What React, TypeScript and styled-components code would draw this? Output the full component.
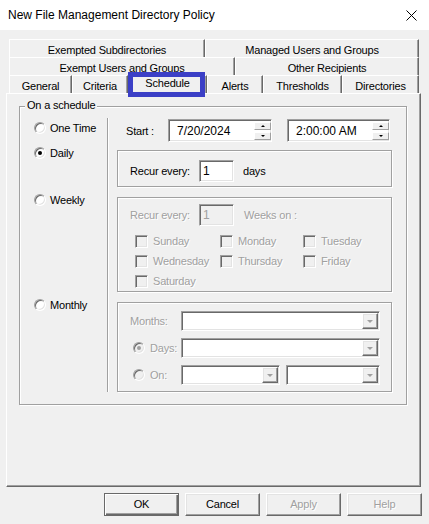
import React from "react";
import styled, { createGlobalStyle, css } from "styled-components";

const Global = createGlobalStyle`
  html, body { margin: 0; padding: 0; background: #f0f0f0; }
  body {
    font-family: "Liberation Sans", Arial, sans-serif;
    font-size: 11px;
    letter-spacing: -0.2px;
    color: #000;
  }
  * { box-sizing: border-box; }
`;

const sunken = css`
  border: 1px solid;
  border-color: #a0a0a0 #fff #fff #a0a0a0;
  box-shadow: inset 1px 1px 0 #696969, inset -1px -1px 0 #e3e3e3;
`;

const raised = css`
  border: 1px solid;
  border-color: #fff #696969 #696969 #fff;
  box-shadow: inset -1px -1px 0 #a0a0a0, inset 1px 1px 0 #e3e3e3;
`;

const disabledText = css`
  color: #a0a0a0;
  text-shadow: 1px 1px 0 #fff;
`;

const Window = styled.div`
  width: 429px;
  height: 524px;
  display: flex;
  flex-direction: column;
  background: #f0f0f0;
  overflow: hidden;
`;

const TitleBar = styled.div`
  height: 30px;
  flex: none;
  background: #fff;
  display: flex;
  align-items: center;
  justify-content: space-between;
  padding: 0 12px 0 8px;
`;

const Title = styled.div`
  font-size: 12px;
  letter-spacing: 0;
  padding-bottom: 1px;
`;

const CloseButton = styled.span`
  display: flex;
  width: 11px;
  height: 11px;
`;

const Body = styled.div`
  flex: 1;
  display: flex;
  flex-direction: column;
  padding: 9px 8px 0 6px;
`;

const TabStrip = styled.div`
  display: flex;
  flex-direction: column;
  margin: 0 2px 0 3px;
  position: relative;
  z-index: 1;
`;

const TabRow = styled.div`
  display: flex;
  height: 18px;
`;

const Tab = styled.div<{ $w: number; $selected?: boolean }>`
  position: relative;
  flex: 0 0 ${(p) => p.$w}px;
  display: flex;
  align-items: center;
  justify-content: center;
  white-space: nowrap;
  border-top: 1px solid #fff;
  border-left: 1px solid #fff;
  border-right: 1px solid #696969;
  box-shadow: inset -1px 0 0 #a0a0a0;
  padding-top: ${(p) => (p.$selected ? 0 : 2)}px;
  padding-bottom: ${(p) => (p.$selected ? 3 : 0)}px;
`;

const Highlight = styled.span`
  position: absolute;
  top: -4px;
  left: -1px;
  right: 1px;
  bottom: -4px;
  border: 5px solid #3b3fc6;
  pointer-events: none;
`;

const Panel = styled.div`
  height: 394px;
  flex: none;
  border: 1px solid;
  border-color: #fff #696969 #696969 #fff;
  box-shadow: inset -1px -1px 0 #a0a0a0;
  padding: 12px 13px 0 12px;
`;

const GroupBox = styled.div`
  position: relative;
  border: 1px solid #a0a0a0;
  box-shadow: inset 1px 1px 0 #fff, 1px 1px 0 #fff;
  padding: 11px 14px 12px 0;
`;

const GroupLabel = styled.span`
  position: absolute;
  top: -8px;
  left: 5px;
  padding: 0 2px;
  line-height: 13px;
  background: #f0f0f0;
`;

type SectionKind = "first" | "middle" | "last";

const Section = styled.div`
  display: grid;
  grid-template-columns: 88px 1fr;
  column-gap: 9px;
`;

const LeftCell = styled.div<{ $kind: SectionKind }>`
  border-right: 1px solid #a0a0a0;
  box-shadow: 1px 0 0 #fff;
  padding-left: 14px;
  padding-top: ${(p) => (p.$kind === "first" ? 4 : 0)}px;
`;

const RightCell = styled.div<{ $kind: SectionKind }>`
  padding-top: ${(p) => (p.$kind === "first" ? 1 : 3)}px;
  padding-bottom: ${(p) =>
    p.$kind === "first" ? 5 : p.$kind === "middle" ? 7 : 0}px;
`;

const RadioItem = styled.label<{ $disabled?: boolean }>`
  display: flex;
  align-items: center;
  gap: 4px;
  height: 12px;
  line-height: 12px;
  white-space: nowrap;
  ${(p) => p.$disabled && disabledText}
`;

const RadioCircle = styled.span<{ $checked?: boolean; $disabled?: boolean }>`
  position: relative;
  flex: none;
  width: 12px;
  height: 12px;
  border-radius: 50%;
  background: ${(p) => (p.$disabled ? "#f0f0f0" : "#fff")};
  border: 1px solid;
  border-color: #a0a0a0 #fff #fff #a0a0a0;
  box-shadow: inset 1px 1px 0 #696969, inset -1px -1px 0 #e3e3e3;
  &::after {
    content: "";
    display: ${(p) => (p.$checked ? "block" : "none")};
    position: absolute;
    left: 3px;
    top: 3px;
    width: 4px;
    height: 4px;
    border-radius: 50%;
    background: ${(p) => (p.$disabled ? "#a0a0a0" : "#000")};
  }
`;

const StartRow = styled.div`
  display: flex;
  align-items: center;
  height: 23px;
  padding-left: 9px;
`;

const FieldLabel = styled.span<{ $w: number; $disabled?: boolean }>`
  flex: none;
  width: ${(p) => p.$w}px;
  white-space: nowrap;
  ${(p) => p.$disabled && disabledText}
`;

const SpinBox = styled.div<{ $w: number; $gapBefore?: number }>`
  ${sunken};
  width: ${(p) => p.$w}px;
  margin-left: ${(p) => p.$gapBefore ?? 0}px;
  height: 23px;
  display: flex;
  background: #fff;
`;

const SpinText = styled.span`
  flex: 1;
  display: flex;
  align-items: center;
  padding-left: 8px;
  font-size: 12px;
  letter-spacing: 0;
`;

const SpinButtons = styled.div`
  width: 17px;
  flex: none;
  display: flex;
  flex-direction: column;
  justify-content: center;
  gap: 2px;
`;

const SpinButton = styled.span<{ $dir: "up" | "down" }>`
  height: 8px;
  display: flex;
  align-items: center;
  justify-content: center;
  background: #f0f0f0;
  border: 1px solid;
  border-color: #fff #a0a0a0 #a0a0a0 #fff;
  &::before {
    content: "";
    border-left: 2px solid transparent;
    border-right: 2px solid transparent;
    ${(p) =>
      p.$dir === "up"
        ? "border-bottom: 2px solid #000;"
        : "border-top: 2px solid #000;"}
  }
`;

const Frame = styled.div<{ $h: number }>`
  height: ${(p) => p.$h}px;
  border: 1px solid #a0a0a0;
  box-shadow: inset 1px 1px 0 #fff, 1px 1px 0 #fff;
`;

const FrameRow = styled.div<{ $pt: number }>`
  display: flex;
  align-items: center;
  padding: ${(p) => p.$pt}px 0 0 12px;
`;

const TextBox = styled.div<{ $disabled?: boolean }>`
  ${sunken};
  width: 35px;
  height: 22px;
  flex: none;
  display: flex;
  align-items: center;
  padding-left: 3px;
  font-size: 12px;
  letter-spacing: 0;
  background: ${(p) => (p.$disabled ? "#f0f0f0" : "#fff")};
  color: ${(p) => (p.$disabled ? "#a0a0a0" : "#000")};
`;

const AfterText = styled.span<{ $ml: number; $disabled?: boolean }>`
  margin-left: ${(p) => p.$ml}px;
  white-space: nowrap;
  ${(p) => p.$disabled && disabledText}
`;

const DaysGrid = styled.div`
  display: grid;
  grid-template-columns: 85px 83px 1fr;
  grid-auto-rows: 20px;
  margin: 5px 0 0 17px;
`;

const CheckItem = styled.label`
  display: flex;
  align-items: center;
  gap: 5px;
  white-space: nowrap;
  ${disabledText}
`;

const CheckBox = styled.span`
  ${sunken};
  width: 13px;
  height: 13px;
  flex: none;
  background: #f0f0f0;
`;

const MonthRows = styled.div`
  display: flex;
  flex-direction: column;
  gap: 7px;
  padding: 8px 11px 0 12px;
`;

const MonthRow = styled.div`
  display: flex;
  align-items: center;
  gap: 6px;
  height: 20px;
`;

const MonthLabel = styled.span`
  flex: none;
  width: 45px;
  display: flex;
  align-items: center;
  gap: 5px;
  white-space: nowrap;
  ${disabledText}
`;

const RadioSlot = styled.span`
  display: flex;
  padding-left: 3px;
`;

const Combo = styled.div<{ $w?: number }>`
  ${sunken};
  ${(p) => (p.$w ? `width: ${p.$w}px; flex: none;` : "flex: 1;")}
  height: 20px;
  display: flex;
  justify-content: flex-end;
  padding: 1px;
  background: #fff;
`;

const ComboButton = styled.span`
  width: 16px;
  display: flex;
  align-items: center;
  justify-content: center;
  background: #f0f0f0;
  ${raised};
  &::before {
    content: "";
    margin-top: 1px;
    border-left: 3px solid transparent;
    border-right: 3px solid transparent;
    border-top: 3px solid #a0a0a0;
  }
`;

const ButtonRow = styled.div`
  display: flex;
  justify-content: flex-end;
  gap: 6px;
  padding-top: 6px;
  margin-right: -1px;
`;

const DialogButton = styled.button<{ $default?: boolean }>`
  width: 75px;
  height: 23px;
  padding: 0 0 1px;
  font: inherit;
  letter-spacing: inherit;
  background: #f0f0f0;
  color: #000;
  ${raised};
  ${(p) =>
    p.$default &&
    css`
      border-color: #696969;
      box-shadow: inset 1px 1px 0 #fff, inset -1px -1px 0 #696969,
        inset -2px -2px 0 #a0a0a0;
    `}
  &:disabled {
    ${disabledText}
  }
`;

const TAB_ROWS: { label: string; w: number; selected?: boolean }[][] = [
  [
    { label: "Exempted Subdirectories", w: 196 },
    { label: "Managed Users and Groups", w: 214 },
  ],
  [
    { label: "Exempt Users and Groups", w: 226 },
    { label: "Other Recipients", w: 184 },
  ],
  [
    { label: "General", w: 63 },
    { label: "Criteria", w: 56 },
    { label: "Schedule", w: 79, selected: true },
    { label: "Alerts", w: 56 },
    { label: "Thresholds", w: 79 },
    { label: "Directories", w: 77 },
  ],
];

const WEEKDAYS = [
  "Sunday",
  "Monday",
  "Tuesday",
  "Wednesday",
  "Thursday",
  "Friday",
  "Saturday",
];

function Radio({
  label,
  checked,
}: {
  label: string;
  checked?: boolean;
}) {
  return (
    <RadioItem>
      <RadioCircle $checked={checked} />
      {label}
    </RadioItem>
  );
}

function Spin({ value, w, gap }: { value: string; w: number; gap?: number }) {
  return (
    <SpinBox $w={w} $gapBefore={gap}>
      <SpinText>{value}</SpinText>
      <SpinButtons>
        <SpinButton $dir="up" />
        <SpinButton $dir="down" />
      </SpinButtons>
    </SpinBox>
  );
}

function Dropdown({ w }: { w?: number }) {
  return (
    <Combo $w={w}>
      <ComboButton />
    </Combo>
  );
}

export default function App() {
  return (
    <>
      <Global />
      <Window>
        <TitleBar>
          <Title>New File Management Directory Policy</Title>
          <CloseButton>
            <svg width="11" height="11" viewBox="0 0 11 11">
              <path
                d="M0.5 0.5 L10.5 10.5 M10.5 0.5 L0.5 10.5"
                stroke="#000"
                strokeWidth="1"
                fill="none"
              />
            </svg>
          </CloseButton>
        </TitleBar>
        <Body>
          <TabStrip>
            {TAB_ROWS.map((row, i) => (
              <TabRow key={i}>
                {row.map((t) => (
                  <Tab key={t.label} $w={t.w} $selected={t.selected}>
                    {t.label}
                    {t.selected && <Highlight />}
                  </Tab>
                ))}
              </TabRow>
            ))}
          </TabStrip>
          <Panel>
            <GroupBox>
              <GroupLabel>On a schedule</GroupLabel>

              <Section>
                <LeftCell $kind="first">
                  <Radio label="One Time" />
                </LeftCell>
                <RightCell $kind="first">
                  <StartRow>
                    <FieldLabel $w={42}>Start :</FieldLabel>
                    <Spin value="7/20/2024" w={104} />
                    <Spin value="2:00:00 AM" w={103} gap={15} />
                  </StartRow>
                </RightCell>
              </Section>

              <Section>
                <LeftCell $kind="middle">
                  <Radio label="Daily" checked />
                </LeftCell>
                <RightCell $kind="middle">
                  <Frame $h={37}>
                    <FrameRow $pt={9}>
                      <FieldLabel $w={69}>Recur every:</FieldLabel>
                      <TextBox>1</TextBox>
                      <AfterText $ml={9}>days</AfterText>
                    </FrameRow>
                  </Frame>
                </RightCell>
              </Section>

              <Section>
                <LeftCell $kind="middle">
                  <Radio label="Weekly" />
                </LeftCell>
                <RightCell $kind="middle">
                  <Frame $h={95}>
                    <FrameRow $pt={6}>
                      <FieldLabel $w={69} $disabled>
                        Recur every:
                      </FieldLabel>
                      <TextBox $disabled>1</TextBox>
                      <AfterText $ml={10} $disabled>
                        Weeks on :
                      </AfterText>
                    </FrameRow>
                    <DaysGrid>
                      {WEEKDAYS.map((d) => (
                        <CheckItem key={d}>
                          <CheckBox />
                          {d}
                        </CheckItem>
                      ))}
                    </DaysGrid>
                  </Frame>
                </RightCell>
              </Section>

              <Section>
                <LeftCell $kind="last">
                  <Radio label="Monthly" />
                </LeftCell>
                <RightCell $kind="last">
                  <Frame $h={90}>
                    <MonthRows>
                      <MonthRow>
                        <MonthLabel>Months:</MonthLabel>
                        <Dropdown />
                      </MonthRow>
                      <MonthRow>
                        <MonthLabel>
                          <RadioSlot>
                            <RadioCircle $checked $disabled />
                          </RadioSlot>
                          Days:
                        </MonthLabel>
                        <Dropdown />
                      </MonthRow>
                      <MonthRow>
                        <MonthLabel>
                          <RadioSlot>
                            <RadioCircle $disabled />
                          </RadioSlot>
                          On:
                        </MonthLabel>
                        <Dropdown w={99} />
                        <Dropdown />
                      </MonthRow>
                    </MonthRows>
                  </Frame>
                </RightCell>
              </Section>
            </GroupBox>
          </Panel>
          <ButtonRow>
            <DialogButton $default>OK</DialogButton>
            <DialogButton>Cancel</DialogButton>
            <DialogButton disabled>Apply</DialogButton>
            <DialogButton disabled>Help</DialogButton>
          </ButtonRow>
        </Body>
      </Window>
    </>
  );
}
